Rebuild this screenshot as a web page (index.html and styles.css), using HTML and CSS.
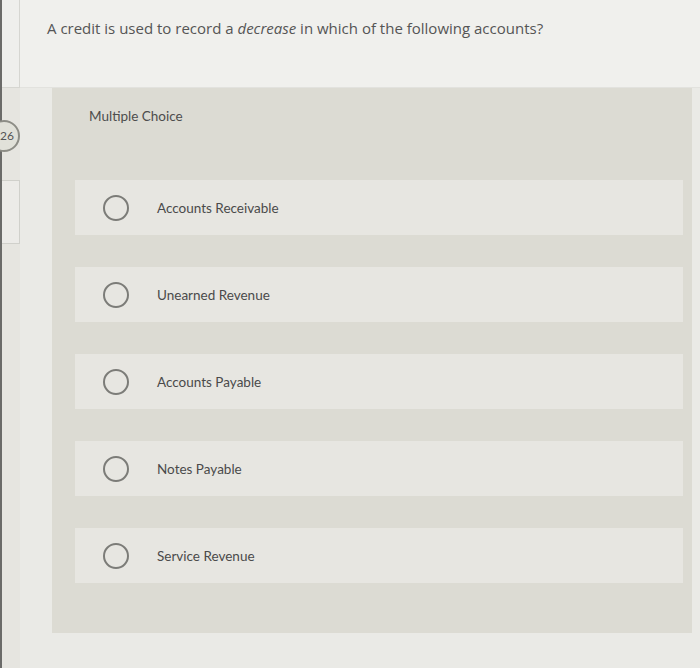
FILE: index.html
```html
<!DOCTYPE html>
<html lang="en">
<head>
	<meta charset="UTF-8">
	<title>Multiple Choice Question</title>
	<link rel="stylesheet" href="styles.css">
</head>
<body>
	<div class="page">
		<!-- 왼쪽 문제 번호 레일 -->
		<div class="rail">
			<div class="rail-box"></div>
			<div class="rail-num">26</div>
			<div class="rail-box2"></div>
		</div>

		<div class="main">
			<div class="question">A credit is used to record a <em>decrease</em> in which of the following accounts?</div>

			<div class="panel">
				<p class="panel-title">Multiple Choice</p>
				<div class="options">
					<div class="option"><span class="radio"></span><span class="label">Accounts Receivable</span></div>
					<div class="option"><span class="radio"></span><span class="label">Unearned Revenue</span></div>
					<div class="option"><span class="radio"></span><span class="label">Accounts Payable</span></div>
					<div class="option"><span class="radio"></span><span class="label">Notes Payable</span></div>
					<div class="option"><span class="radio"></span><span class="label">Service Revenue</span></div>
				</div>
			</div>
		</div>
	</div>
</body>
</html>
```

FILE: styles.css
```css
body { margin: 0; background: #eaeae6; font-family: Lato, "Open Sans", sans-serif; }

.page { display: flex; height: 668px; overflow: hidden; }

.rail { width: 18px; border-left: 2px solid #6b6b69; background: #e6e5e0; display: flex; flex-direction: column; }
.rail-box { height: 88px; border-right: 1px solid #d6d6d1; border-bottom: 1px solid #d6d6d1; background: #efefec; box-sizing: border-box; }
.rail-num { margin-top: 32px; margin-left: -14px; width: 32px; height: 32px; box-sizing: border-box; border: 2px solid #8d8d86; border-radius: 16px; background: #e1e1d9; font-size: 12px; color: #555; line-height: 28px; text-align: right; padding-right: 4px; }
.rail-box2 { margin-top: 28px; height: 62px; border: 1px solid #d0d0cb; border-left: none; background: #ecebe8; }

.main { flex: 1; display: flex; flex-direction: column; }

.question { height: 88px; box-sizing: border-box; padding: 18px 0 0 27px; background: #f0f0ed; border-bottom: 1px solid #e2e2de; font-family: "Open Sans", sans-serif; font-size: 15px; color: #555; }
.question em { font-style: italic; }

.panel { margin: 0 8px 0 32px; height: 525px; background: #dcdbd3; padding: 20px 9px 0 23px; }
.panel-title { margin: 0 0 0 14px; font-size: 13.5px; color: #4d4d4d; height: 20px; }

.options { display: flex; flex-direction: column; gap: 32px; margin-top: 52px; }
.option { height: 55px; background: #e7e6e1; display: flex; align-items: center; padding-left: 28px; }
.radio { width: 22px; height: 22px; border: 2px solid #7c7c78; border-radius: 50%; }
.label { margin-left: 28px; font-size: 13.5px; color: #4a4a4a; }
```
